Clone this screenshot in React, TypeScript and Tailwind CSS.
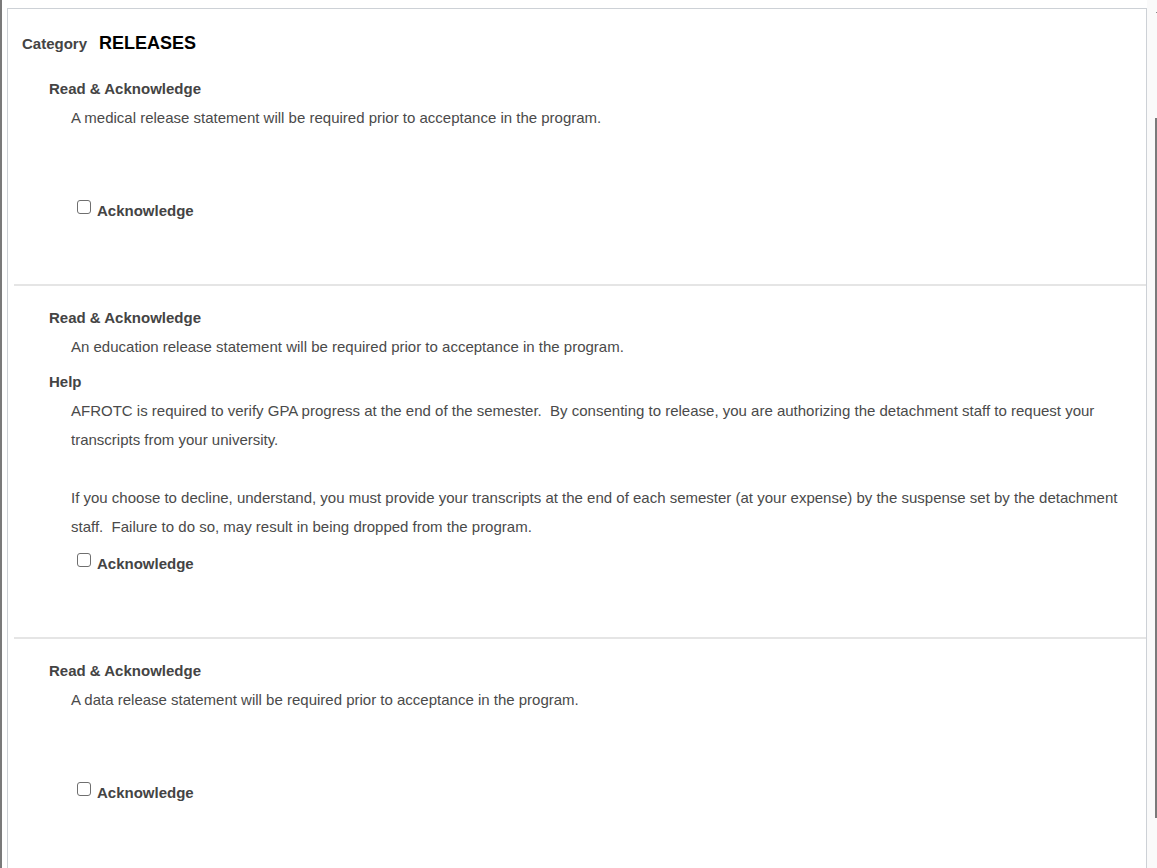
export default function App() {
  const heading = "text-[15px] font-bold leading-[20px] text-[#444]";
  const body = "text-[15px] leading-[29px] text-[#4a4a4a]";

  const Check = ({ className = "" }: { className?: string }) => (
    <div className={`flex items-start pl-[63px] ${className}`}>
      <span className="-mt-[1px] block h-[14px] w-[14px] rounded-[3px] border border-[#6f6f6f] bg-white" />
      <span className={`ml-[6px] ${heading}`}>Acknowledge</span>
    </div>
  );

  return (
    <div className="flex h-[868px] w-[1157px] overflow-hidden bg-white font-['Liberation_Sans',Arial,sans-serif]">
      <div className="w-[2px] shrink-0 bg-[#7a7a7a]" />
      <div className="w-[5px] shrink-0 bg-white" />
      <div className="mt-[8px] flex w-[1140px] shrink-0 flex-col border-l border-r border-t border-[#cdd1d6] pt-[23px]">
        <div className="flex items-baseline pl-[14px] leading-[22px]">
          <span className="text-[15px] font-bold text-[#444]">Category</span>
          <span className="ml-[12px] text-[18px] font-bold text-black">RELEASES</span>
        </div>

        <div className="mt-[2px] ml-[6px] border-b-2 border-[#e5e5e5] pb-[63px] pt-[22px]">
          <div className={`pl-[35px] ${heading}`}>Read &amp; Acknowledge</div>
          <div className={`mt-[4px] pl-[57px] ${body}`}>
            A medical release statement will be required prior to acceptance in the program.
          </div>
          <Check className="mt-[69px]" />
        </div>

        <div className="ml-[6px] border-b-2 border-[#e5e5e5] pb-[63px] pt-[22px]">
          <div className={`pl-[35px] ${heading}`}>Read &amp; Acknowledge</div>
          <div className={`mt-[4px] pl-[57px] ${body}`}>
            An education release statement will be required prior to acceptance in the program.
          </div>
          <div className={`mt-[11px] pl-[35px] ${heading}`}>Help</div>
          <div className={`mt-[4px] pl-[57px] pr-[15px] ${body}`}>
            AFROTC is required to verify GPA progress at the end of the semester.{"\u00a0 "}By consenting to release, you are authorizing the detachment staff to request your transcripts from your university.
            <br />
            <br />
            If you choose to decline, understand, you must provide your transcripts at the end of each semester (at your expense) by the suspense set by the detachment staff.{"\u00a0 "}Failure to do so, may result in being dropped from the program.
          </div>
          <Check className="mt-[13px]" />
        </div>

        <div className="ml-[6px] pt-[22px]">
          <div className={`pl-[35px] ${heading}`}>Read &amp; Acknowledge</div>
          <div className={`mt-[4px] pl-[57px] ${body}`}>
            A data release statement will be required prior to acceptance in the program.
          </div>
          <Check className="mt-[69px]" />
        </div>
      </div>
      <div className="relative w-[10px] shrink-0 bg-[#fafafa]">
        <div className="absolute left-[9px] top-[12px] h-[1px] w-[2px] bg-[#888]" />
        <div className="absolute left-[8px] top-[118px] h-[700px] w-[2px] bg-[#7a7a7a]" />
      </div>
    </div>
  );
}
